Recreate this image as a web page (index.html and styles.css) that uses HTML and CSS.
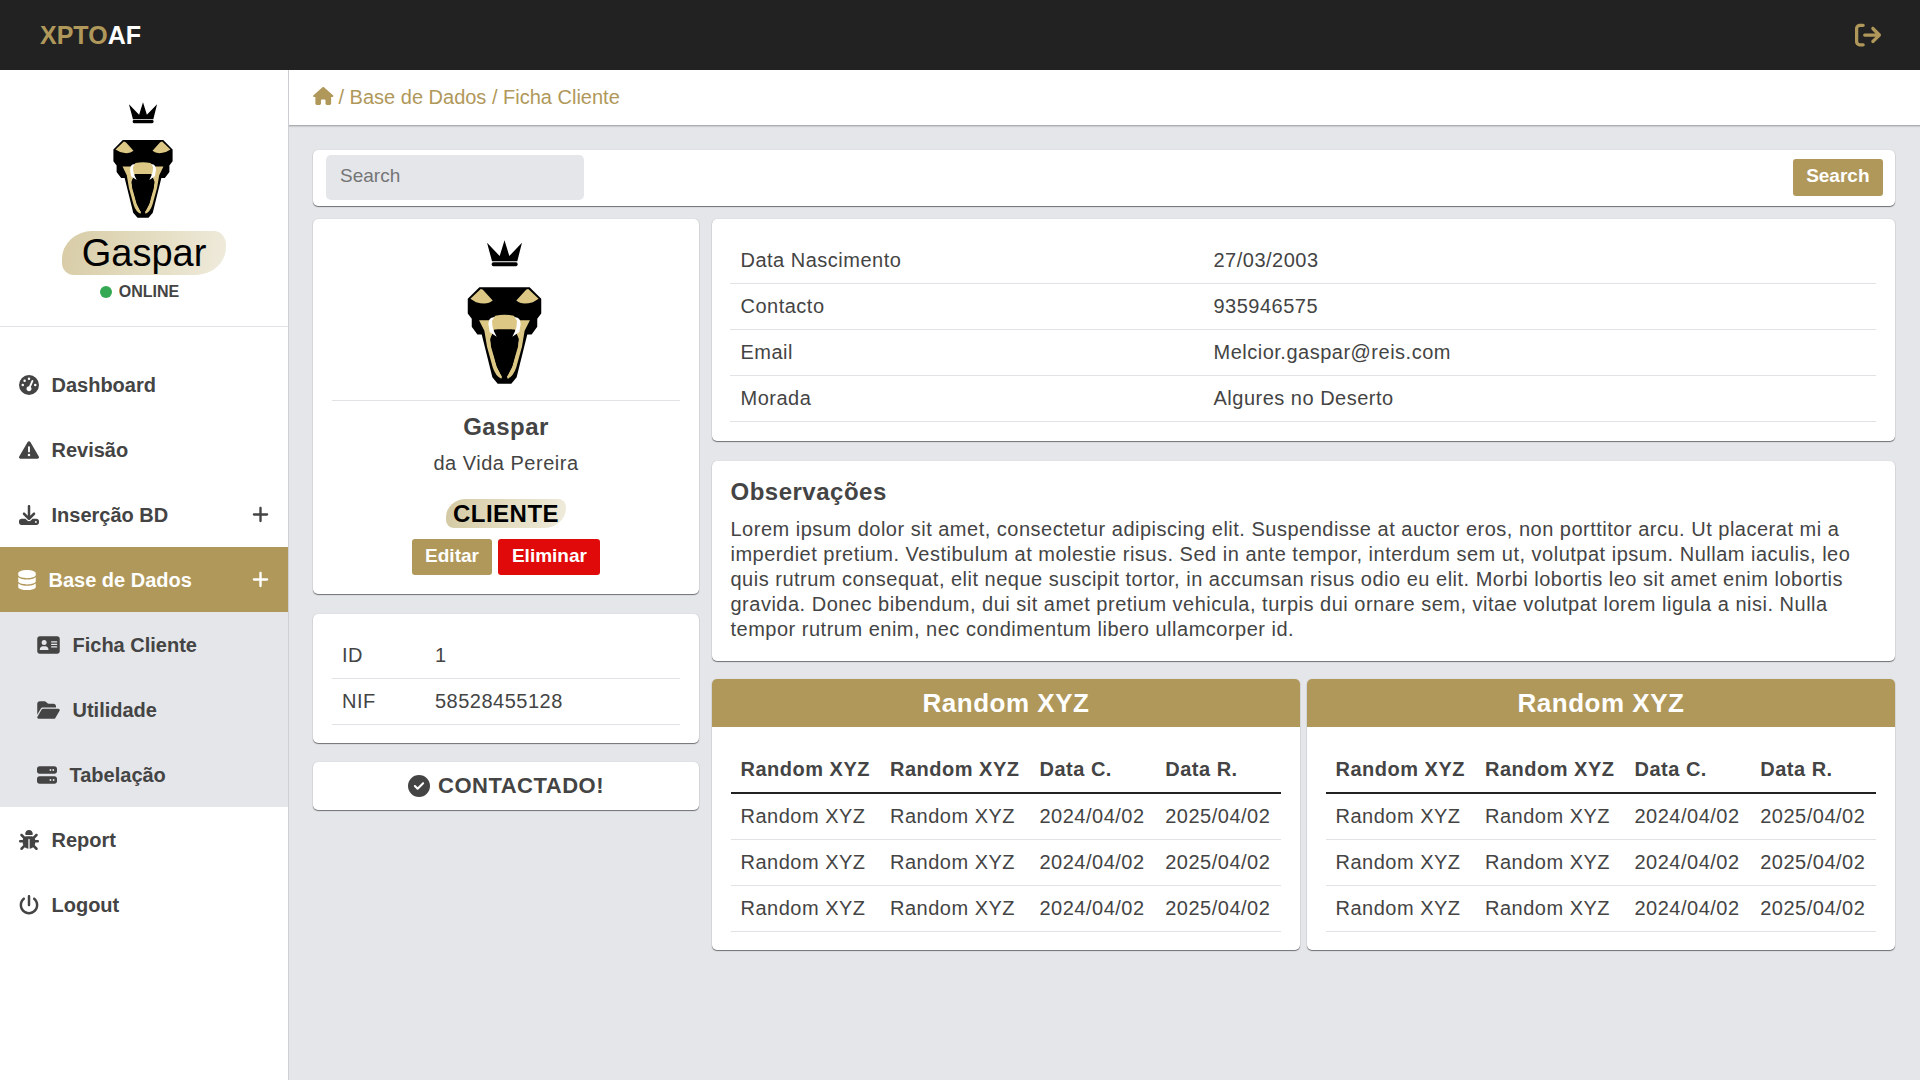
FILE: index.html
```html
<!DOCTYPE html>
<html lang="pt">
<head>
<meta charset="utf-8">
<title>XPTOAF - Ficha Cliente</title>
<link rel="stylesheet" href="styles.css">
</head>
<body>
<svg class="defs" width="0" height="0" aria-hidden="true">
  <symbol id="snake" viewBox="82 29 223 433">
    <path d="M141 37 179 77 193.5 30 208 77 246 37 232 93H156Z"/>
    <rect x="155" y="96" width="78" height="12" rx="5"/>
    <path d="M118 171H269L304 206V250L292 266V290L275 313H262L230 442 214 461H173L157 442 125 313H112L95 290V266L83 250V206Z"/>
    <path class="gold" d="M91 206 122 176Q128 176 132 182L158 211Q142 226 108 216ZM296 206 265 176Q259 176 255 182L229 211Q245 226 279 216Z"/>
    <path class="gold" d="M117 270H152L166 257Q193 250 221 257L235 270H270L254 302 246 350 229 412Q220 440 203 446L201 440 216 412 234 350 236 325 224 298H163L151 325 153 350 171 412 186 440 184 446Q167 440 158 412L141 350 133 302Z"/>
    <path d="M172 298H215L228 306 236 330 218 405 203 436H184L169 405 151 330 159 306Z"/>
    <path class="white" d="M163 261Q145 260 145 282L149 306 170 320 160 300 157 286 156 272 163 261ZM224 261Q242 260 242 282L238 306 217 320 227 300 230 286 231 272 224 261Z"/>
  </symbol>
  <symbol id="plus" viewBox="0 0 448 512"><path d="M256 80c0-17.700-14.300-32-32-32s-32 14.300-32 32V224H48c-17.700 0-32 14.300-32 32s14.300 32 32 32H192V432c0 17.700 14.300 32 32 32s32-14.300 32-32V288H400c17.700 0 32-14.300 32-32s-14.300-32-32-32H256V80z"/></symbol>
</svg>

<header class="topbar">
  <div class="brand"><span>XPTO</span>AF</div>
  <svg class="exit" viewBox="0 0 512 512"><path d="M502.600 278.600c12.500-12.500 12.500-32.800 0-45.300l-128-128c-12.500-12.500-32.800-12.500-45.300 0s-12.500 32.800 0 45.300L402.700 224 192 224c-17.700 0-32 14.300-32 32s14.300 32 32 32l210.700 0-73.400 73.400c-12.500 12.500-12.500 32.800 0 45.300s32.800 12.500 45.300 0l128-128zM160 96c17.700 0 32-14.300 32-32s-14.300-32-32-32L96 32C43 32 0 75 0 128L0 384c0 53 43 96 96 96l64 0c17.700 0 32-14.300 32-32s-14.300-32-32-32l-64 0c-17.700 0-32-14.300-32-32l0-256c0-17.700 14.300-32 32-32l64 0z"/></svg>
</header>

<div class="layout">
  <aside class="sidebar">
    <div class="user">
      <svg class="user-logo"><use href="#snake"/></svg>
      <div class="user-name">Gaspar</div>
      <div class="status"><i></i>ONLINE</div>
    </div>
    <nav class="menu">
      <a class="item"><svg viewBox="0 0 512 512"><path d="M0 256a256 256 0 1 1 512 0A256 256 0 1 1 0 256zM288 96a32 32 0 1 0 -64 0 32 32 0 1 0 64 0zM256 416c35.300 0 64-28.700 64-64c0-17.400-6.900-33.100-18.100-44.600L366 161.700c5.300-12.100-.2-26.300-12.300-31.600s-26.300 .2-31.600 12.300L257.900 288c-.6 0-1.300 0-1.900 0c-35.300 0-64 28.700-64 64s28.700 64 64 64zM176 144a32 32 0 1 0 -64 0 32 32 0 1 0 64 0zM96 288a32 32 0 1 0 0-64 32 32 0 1 0 0 64zm352-32a32 32 0 1 0 -64 0 32 32 0 1 0 64 0z"/></svg>Dashboard</a>
      <a class="item"><svg viewBox="0 0 512 512"><path d="M256 32c14.200 0 27.300 7.500 34.500 19.800l216 368c7.300 12.400 7.300 27.700 .2 40.100S486.300 480 472 480H40c-14.300 0-27.600-7.700-34.700-20.100s-7-27.800 .2-40.100l216-368C228.700 39.500 241.800 32 256 32zm0 128c-13.300 0-24 10.700-24 24V296c0 13.300 10.700 24 24 24s24-10.700 24-24V184c0-13.300-10.700-24-24-24zm32 224a32 32 0 1 0 -64 0 32 32 0 1 0 64 0z"/></svg>Revisão</a>
      <a class="item"><svg viewBox="0 0 512 512"><path d="M288 32c0-17.700-14.300-32-32-32s-32 14.300-32 32V274.700l-73.400-73.400c-12.500-12.500-32.800-12.500-45.300 0s-12.500 32.800 0 45.300l128 128c12.500 12.500 32.800 12.500 45.300 0l128-128c12.500-12.500 12.500-32.800 0-45.300s-32.800-12.500-45.300 0L288 274.700V32zM64 352c-35.300 0-64 28.700-64 64v32c0 35.300 28.700 64 64 64H448c35.300 0 64-28.700 64-64V416c0-35.300-28.700-64-64-64H346.500l-45.300 45.300c-25 25-65.500 25-90.500 0L165.500 352H64zm368 56a24 24 0 1 1 0 48 24 24 0 1 1 0-48z"/></svg>Inserção BD<svg class="more"><use href="#plus"/></svg></a>
      <a class="item active"><svg class="narrow" viewBox="0 0 448 512"><path d="M448 80v48c0 44.200-100.300 80-224 80S0 172.200 0 128V80C0 35.800 100.300 0 224 0S448 35.800 448 80zM393.200 214.700c20.800-7.400 39.900-16.900 54.800-28.600V288c0 44.200-100.300 80-224 80S0 332.200 0 288V186.100c14.900 11.800 34 21.200 54.800 28.600C99.700 230.700 159.500 240 224 240s124.300-9.300 169.200-25.300zM0 346.100c14.900 11.800 34 21.200 54.800 28.600C99.700 390.700 159.500 400 224 400s124.300-9.300 169.200-25.300c20.800-7.400 39.900-16.900 54.800-28.600V432c0 44.200-100.300 80-224 80S0 476.200 0 432V346.100z"/></svg>Base de Dados<svg class="more"><use href="#plus"/></svg></a>
      <div class="submenu">
        <a class="item"><svg class="wide" viewBox="0 0 576 512"><path fill-rule="evenodd" d="M64 32C28.700 32 0 60.700 0 96V416c0 35.300 28.700 64 64 64H512c35.300 0 64-28.700 64-64V96c0-35.300-28.700-64-64-64H64zm80 256h64c44.200 0 80 35.800 80 80c0 8.800-7.200 16-16 16H80c-8.800 0-16-7.200-16-16c0-44.200 35.800-80 80-80zm-32-96a64 64 0 1 1 128 0 64 64 0 1 1 -128 0zM368 160H496a16 16 0 0 1 0 32H368a16 16 0 0 1 0-32zM368 224H496a16 16 0 0 1 0 32H368a16 16 0 0 1 0-32zM368 288H496a16 16 0 0 1 0 32H368a16 16 0 0 1 0-32z"/></svg>Ficha Cliente</a>
        <a class="item"><svg class="wide" viewBox="0 0 576 512"><path d="M88.700 223.800L0 375.800V96C0 60.700 28.700 32 64 32H181.500c17 0 33.300 6.700 45.300 18.700l26.500 26.500c12 12 28.300 18.700 45.300 18.700H416c35.300 0 64 28.700 64 64v32H144c-22.800 0-43.800 12.100-55.300 31.800zm27.600 16.100C122.100 230 132.600 224 144 224H544c11.500 0 22 6.100 27.700 16.100s5.700 22.200-.1 32.100l-112 192C453.900 474 443.400 480 432 480H32c-11.500 0-22-6.100-27.700-16.100s-5.700-22.200 .1-32.100l112-192z"/></svg>Utilidade</a>
        <a class="item"><svg viewBox="0 0 512 512"><path d="M64 32C28.700 32 0 60.700 0 96v64c0 35.300 28.700 64 64 64H448c35.300 0 64-28.700 64-64V96c0-35.300-28.700-64-64-64H64zm280 72a24 24 0 1 1 0 48 24 24 0 1 1 0-48zm48 24a24 24 0 1 1 48 0 24 24 0 1 1 -48 0zM64 288c-35.300 0-64 28.700-64 64v64c0 35.300 28.700 64 64 64H448c35.300 0 64-28.700 64-64V352c0-35.300-28.700-64-64-64H64zm280 72a24 24 0 1 1 0 48 24 24 0 1 1 0-48zm56 24a24 24 0 1 1 48 0 24 24 0 1 1 -48 0z"/></svg>Tabelação</a>
      </div>
      <a class="item"><svg viewBox="0 0 512 512"><path d="M256 0c53 0 96 43 96 96v3.600c0 15.700-12.700 28.400-28.400 28.400H188.400c-15.700 0-28.400-12.700-28.400-28.400V96c0-53 43-96 96-96zM41.400 105.400c12.500-12.500 32.800-12.500 45.300 0l64 64c.7 .7 1.300 1.400 1.900 2.100c14.200-7.300 30.400-11.400 47.500-11.400H312c17.100 0 33.200 4.100 47.500 11.400c.6-.7 1.200-1.400 1.900-2.100l64-64c12.500-12.500 32.800-12.500 45.300 0s12.500 32.800 0 45.300l-64 64c-.7 .7-1.400 1.300-2.100 1.900c6.200 12 10.100 25.300 11.100 39.500H480c17.700 0 32 14.300 32 32s-14.300 32-32 32H416c0 24.600-5.500 47.800-15.400 68.600c2.200 1.300 4.200 2.900 6 4.800l64 64c12.500 12.500 12.500 32.800 0 45.300s-32.800 12.500-45.300 0l-63.100-63.100c-24.500 21.800-55.800 36.200-90.300 39.600V240c0-8.800-7.200-16-16-16s-16 7.200-16 16V479.200c-34.500-3.400-65.800-17.800-90.300-39.600L86.600 502.600c-12.500 12.500-32.800 12.500-45.300 0s-12.500-32.800 0-45.300l64-64c1.900-1.900 3.900-3.400 6-4.800C101.500 367.800 96 344.600 96 320H32c-17.700 0-32-14.300-32-32s14.300-32 32-32H96.300c1.100-14.100 5-27.500 11.100-39.500c-.7-.6-1.400-1.200-2.100-1.900l-64-64c-12.500-12.500-12.500-32.800 0-45.300z"/></svg>Report</a>
      <a class="item"><svg viewBox="0 0 512 512"><path d="M288 32c0-17.700-14.300-32-32-32s-32 14.300-32 32V256c0 17.700 14.300 32 32 32s32-14.300 32-32V32zM143.500 120.600c13.600-11.300 15.400-31.500 4.100-45.100s-31.500-15.400-45.100-4.100C49.700 115.400 16 181.800 16 256c0 132.500 107.500 240 240 240s240-107.500 240-240c0-74.200-33.800-140.600-86.600-184.600c-13.600-11.300-33.800-9.400-45.100 4.100s-9.400 33.800 4.100 45.100c38.900 32.300 63.500 81 63.500 135.400c0 97.200-78.800 176-176 176s-176-78.800-176-176c0-54.400 24.700-103.100 63.500-135.400z"/></svg>Logout</a>
    </nav>
  </aside>

  <main class="main">
    <div class="breadcrumb">
      <svg viewBox="0 0 576 512"><path d="M575.800 255.500c0 18-15 32.100-32 32.100h-32l.7 160.200c0 2.700-.2 5.400-.5 8.100V472c0 22.100-17.900 40-40 40H456c-1.100 0-2.200 0-3.300-.1c-1.400 .1-2.800 .1-4.200 .1H416 392c-22.100 0-40-17.900-40-40V448 384c0-17.700-14.300-32-32-32H256c-17.700 0-32 14.300-32 32v64 24c0 22.100-17.900 40-40 40H160 128.100c-1.500 0-3-.1-4.500-.2c-1.200 .1-2.400 .2-3.600 .2H104c-22.100 0-40-17.900-40-40V360c0-.9 0-1.900 .1-2.800V287.600H32c-18 0-32-14-32-32.100c0-9 3-17 10-24L266.400 8c7-7 15-8 22-8s15 2 21 7L564.800 231.500c8 7 12 15 11 24z"/></svg>
      <span>/ Base de Dados / Ficha Cliente</span>
    </div>
    <div class="content">
      <form class="card search">
        <input type="text" placeholder="Search">
        <button class="btn" type="button">Search</button>
      </form>
      <div class="columns">
        <section class="left">
          <div class="card profile">
            <div class="portrait"><svg><use href="#snake"/></svg></div>
            <h2>Gaspar</h2>
            <p>da Vida Pereira</p>
            <div class="tag">CLIENTE</div>
            <div class="actions"><button class="btn" type="button">Editar</button><button class="btn danger" type="button">Eliminar</button></div>
          </div>
          <div class="card ids">
            <table>
              <colgroup><col class="id-key"><col></colgroup>
              <tr><td>ID</td><td>1</td></tr>
              <tr><td>NIF</td><td>58528455128</td></tr>
            </table>
          </div>
          <div class="card contacted">
            <svg viewBox="0 0 512 512"><path d="M256 512A256 256 0 1 0 256 0a256 256 0 1 0 0 512zM369 209L241 337c-9.400 9.400-24.600 9.400-33.900 0l-64-64c-9.400-9.400-9.400-24.600 0-33.900s24.600-9.400 33.900 0l47 47L335 175c9.400-9.400 24.600-9.400 33.900 0s9.400 24.600 0 33.900z"/></svg>CONTACTADO!
          </div>
        </section>
        <section class="right">
          <div class="card details">
            <table>
              <colgroup><col class="detail-key"><col></colgroup>
              <tr><td>Data Nascimento</td><td>27/03/2003</td></tr>
              <tr><td>Contacto</td><td>935946575</td></tr>
              <tr><td>Email</td><td>Melcior.gaspar@reis.com</td></tr>
              <tr><td>Morada</td><td>Algures no Deserto</td></tr>
            </table>
          </div>
          <div class="card notes">
            <h3>Observações</h3>
            <p>Lorem ipsum dolor sit amet, consectetur adipiscing elit. Suspendisse at auctor eros, non porttitor arcu. Ut placerat mi a imperdiet pretium. Vestibulum at molestie risus. Sed in ante tempor, interdum sem ut, volutpat ipsum. Nullam iaculis, leo quis rutrum consequat, elit neque suscipit tortor, in accumsan risus odio eu elit. Morbi lobortis leo sit amet enim lobortis gravida. Donec bibendum, dui sit amet pretium vehicula, turpis dui ornare sem, vitae volutpat lorem ligula a nisi. Nulla tempor rutrum enim, nec condimentum libero ullamcorper id.</p>
          </div>
          <div class="pair">
            <div class="card records">
              <h4>Random XYZ</h4>
              <table>
                <colgroup><col class="name"><col class="name"><col><col></colgroup>
                <thead><tr><th>Random XYZ</th><th>Random XYZ</th><th>Data C.</th><th>Data R.</th></tr></thead>
                <tbody>
                  <tr><td>Random XYZ</td><td>Random XYZ</td><td>2024/04/02</td><td>2025/04/02</td></tr>
                  <tr><td>Random XYZ</td><td>Random XYZ</td><td>2024/04/02</td><td>2025/04/02</td></tr>
                  <tr><td>Random XYZ</td><td>Random XYZ</td><td>2024/04/02</td><td>2025/04/02</td></tr>
                </tbody>
              </table>
            </div>
            <div class="card records">
              <h4>Random XYZ</h4>
              <table>
                <colgroup><col class="name"><col class="name"><col><col></colgroup>
                <thead><tr><th>Random XYZ</th><th>Random XYZ</th><th>Data C.</th><th>Data R.</th></tr></thead>
                <tbody>
                  <tr><td>Random XYZ</td><td>Random XYZ</td><td>2024/04/02</td><td>2025/04/02</td></tr>
                  <tr><td>Random XYZ</td><td>Random XYZ</td><td>2024/04/02</td><td>2025/04/02</td></tr>
                  <tr><td>Random XYZ</td><td>Random XYZ</td><td>2024/04/02</td><td>2025/04/02</td></tr>
                </tbody>
              </table>
            </div>
          </div>
        </section>
      </div>
    </div>
  </main>
</div>
</body>
</html>
```
FILE: styles.css
```css
* { box-sizing: border-box; }
body {
  margin: 0;
  height: 100vh;
  display: flex;
  flex-direction: column;
  overflow: hidden;
  background: #e4e6ea;
  color: #444;
  font: 20px/30px "Liberation Sans", Arial, sans-serif;
}
h2, h3, h4, p { margin: 0; }
svg { fill: currentColor; flex: none; }
.defs { display: block; height: 0; }
.gold { fill: #dcc884; }
.white { fill: #fff; }

.topbar {
  height: 70px;
  flex: none;
  display: flex;
  align-items: center;
  justify-content: space-between;
  padding: 0 39px 0 40px;
  background: #222;
}
.brand { color: #fff; font-size: 25px; font-weight: bold; }
.brand span, .exit { color: #b0985a; }
.exit { width: 26px; height: 26px; }

.layout { flex: 1; display: flex; min-height: 0; }
.sidebar {
  width: 289px;
  flex: none;
  background: #fff;
  border-right: 1px solid #cfd1d6;
}
.user {
  height: 257px;
  display: flex;
  flex-direction: column;
  align-items: center;
  padding-top: 32px;
  border-bottom: 1px solid #e0e2e6;
}
.user-logo { width: 60px; height: 116px; margin-right: 2px; color: #000; }
.user-name {
  width: 164px;
  height: 44px;
  margin-top: 13px;
  padding-bottom: 1px;
  border-radius: 30px 12px 30px 12px / 28px 14px 28px 12px;
  background: linear-gradient(100deg, #d8cca6, #e3dcc0 50%, #efebdc);
  color: #000;
  font-size: 38px;
  line-height: 45px;
  text-align: center;
}
.status {
  display: flex;
  align-items: center;
  gap: 7px;
  margin: 7px 9px 0 0;
  font-size: 16px;
  font-weight: bold;
  line-height: 20px;
}
.status i { width: 12px; height: 12px; border-radius: 50%; background: #34a853; }

.menu { padding-top: 25px; font-weight: bold; }
.item {
  height: 65px;
  display: flex;
  align-items: center;
  gap: 12.5px;
  padding: 0 19px 0 19px;
}
.item svg { width: 20px; height: 20px; }
.item svg.narrow { width: 18px; height: 20px; }
.item svg.wide { width: 23px; height: 20px; }
.item svg.more { width: 17px; height: 19px; margin-left: auto; }
.item.active { background: #b0985a; color: #fff; padding-left: 18px; }
.submenu { background: #e4e6ea; }
.submenu .item { padding-left: 37px; }

.main { flex: 1; display: flex; flex-direction: column; }
.breadcrumb {
  height: 56px;
  display: flex;
  align-items: center;
  gap: 5px;
  padding: 0 0 1px 24px;
  background: #fff;
  border-bottom: 1px solid #adaeb1;
  box-shadow: 0 1px 1px rgba(0, 0, 0, .1);
  color: #b0985a;
}
.breadcrumb svg { width: 20.5px; height: 18px; margin-bottom: 2px; }

.content { padding: 24px 25px 0 24px; letter-spacing: .5px; }
.card {
  background: #fff;
  border-radius: 5px;
  box-shadow: 0 1px 1px rgba(0, 0, 0, .5), 0 0 1px rgba(0, 0, 0, .2);
}
.search {
  height: 56px;
  display: flex;
  align-items: center;
  justify-content: space-between;
  padding: 0 12px 1px 13px;
}
.search input {
  width: 258px;
  height: 45px;
  padding: 0 14px 3px;
  border: 0;
  border-radius: 5px;
  background: #e4e6ea;
  font: 19px "Liberation Sans", Arial, sans-serif;
}
.search input::placeholder { color: #757575; }
.btn {
  height: 36px;
  padding: 0 13.5px 2px;
  border: 0;
  border-radius: 3px;
  background: #b0985a;
  color: #fff;
  font: bold 19px "Liberation Sans", Arial, sans-serif;
}
.search .btn { height: 37px; padding-bottom: 3px; }
.btn.danger { background: #e10a0a; }

.columns { display: flex; gap: 13px; margin-top: 13px; }
.left { width: 386px; flex: none; }
.right { flex: 1; }

.profile {
  height: 375px;
  display: flex;
  flex-direction: column;
  align-items: center;
  padding: 21px 19px 0;
}
.portrait {
  align-self: stretch;
  height: 161px;
  text-align: center;
  border-bottom: 1px solid #e0e2e6;
}
.portrait svg { width: 75px; height: 144px; margin-right: 3px; color: #000; }
.profile h2 { margin-top: 11px; font-size: 24px; }
.profile p { margin-top: 6px; }
.tag {
  width: 120px;
  height: 29px;
  margin-top: 21px;
  border-radius: 20px 8px 22px 8px / 18px 8px 20px 8px;
  background: linear-gradient(100deg, #d3c9a3, #e3dcc0 50%, #efebdc);
  color: #000;
  font-size: 24px;
  font-weight: bold;
  line-height: 29px;
  text-align: center;
}
.actions { display: flex; gap: 6px; margin-top: 11px; }

table { width: 100%; table-layout: fixed; border-collapse: separate; border-spacing: 0; }
td, th { height: 46px; padding: 0 0 2px 10px; border-bottom: 1px solid #e0e2e6; text-align: left; white-space: nowrap; }
.ids { margin-top: 20px; padding: 19px 19px 18px; }
.id-key { width: 93px; }
.contacted {
  height: 48px;
  display: flex;
  align-items: center;
  justify-content: center;
  gap: 8px;
  margin-top: 19px;
  font-size: 22px;
  font-weight: bold;
}
.contacted svg { width: 22px; height: 22px; }

.details { padding: 19px 19px 19px 18px; }
.details td { padding-left: 10.5px; }
.detail-key { width: 473px; }
.notes { height: 200px; margin-top: 20px; padding: 16px 17.5px 0 18.5px; }
.notes h3 { font-size: 24px; line-height: 30px; }
.notes p { margin-top: 10px; line-height: 25px; }
.pair { display: grid; grid-template-columns: 1fr 1fr; gap: 7px; margin-top: 18px; }
.records { overflow: hidden; height: 271px; padding: 0 19px 0 18.5px; }
.records h4 {
  height: 48px;
  margin: 0 -19px 19px -18.5px;
  background: #b0985a;
  color: #fff;
  font-size: 26px;
  line-height: 48px;
  text-align: center;
}
.records .name { width: 149.5px; }
.records th { height: 48px; padding-bottom: 0; border-bottom: 2px solid #222; }
```
